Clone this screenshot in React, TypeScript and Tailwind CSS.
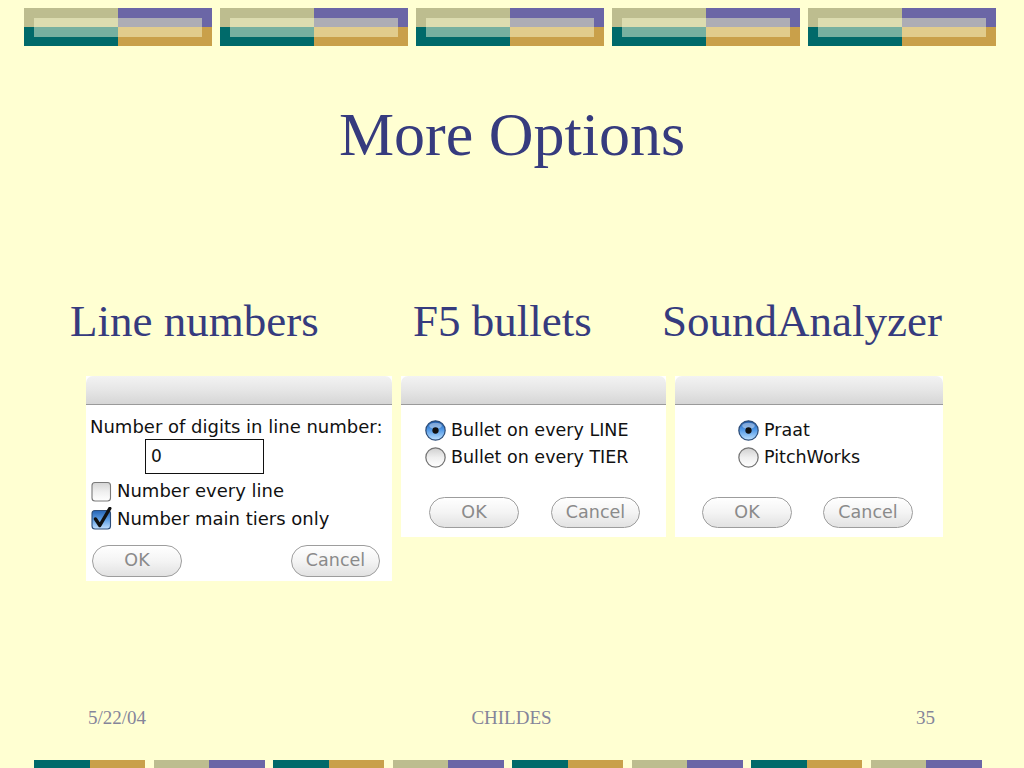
import React from "react";

const serif = { fontFamily: '"Liberation Serif", "Times New Roman", serif' };
const mac = { fontFamily: '"DejaVu Sans", "Lucida Grande", Verdana, sans-serif' };

function BannerBlock() {
  return (
    <svg width="188" height="38" viewBox="0 0 188 38" className="block shrink-0">
      <rect x="0" y="0" width="94" height="19" fill="#BDBD8F" />
      <rect x="94" y="0" width="94" height="19" fill="#6B66A6" />
      <rect x="0" y="19" width="94" height="19" fill="#006A6A" />
      <rect x="94" y="19" width="94" height="19" fill="#C9A04A" />
      <rect x="10" y="10" width="84" height="9" fill="#DCDCB0" />
      <rect x="94" y="10" width="84" height="9" fill="#ADADB5" />
      <rect x="10" y="19" width="84" height="10" fill="#76B0A0" />
      <rect x="94" y="19" width="84" height="10" fill="#E1CC8C" />
    </svg>
  );
}

function FooterBlock({ alt }: { alt: boolean }) {
  return (
    <div className="flex h-[8px] w-[111px] shrink-0">
      <div className={alt ? "h-full w-1/2 bg-[#BDBD8F]" : "h-full w-1/2 bg-[#006A6A]"} />
      <div className={alt ? "h-full w-1/2 bg-[#6B66A6]" : "h-full w-1/2 bg-[#C9A04A]"} />
    </div>
  );
}

function Radio({ on }: { on: boolean }) {
  const id = on ? "radOn" : "radOff";
  return (
    <svg width="21" height="21" viewBox="0 0 20 20" className="block shrink-0">
      <defs>
        <linearGradient id={id} x1="0" y1="0" x2="0" y2="1">
          {on ? (
            <>
              <stop offset="0" stopColor="#1a56a8" />
              <stop offset="0.45" stopColor="#4f97e6" />
              <stop offset="1" stopColor="#bfe2ff" />
            </>
          ) : (
            <>
              <stop offset="0" stopColor="#cfcfcf" />
              <stop offset="0.5" stopColor="#efefef" />
              <stop offset="1" stopColor="#ffffff" />
            </>
          )}
        </linearGradient>
      </defs>
      <circle cx="10" cy="10" r="9.2" fill={`url(#${id})`} stroke={on ? "#2d4d78" : "#747474"} strokeWidth="1.2" />
      {on && <ellipse cx="10" cy="5.5" rx="6" ry="3" fill="#ffffff" opacity="0.4" />}
      {on && <circle cx="10" cy="10" r="3" fill="#111" />}
    </svg>
  );
}

function Checkbox({ on }: { on: boolean }) {
  const id = on ? "chkOn" : "chkOff";
  return (
    <svg width="22" height="23" viewBox="0 0 22 23" className="block shrink-0">
      <defs>
        <linearGradient id={id} x1="0" y1="0" x2="0" y2="1">
          {on ? (
            <>
              <stop offset="0" stopColor="#2463b5" />
              <stop offset="0.5" stopColor="#5f9fe4" />
              <stop offset="1" stopColor="#c2e0ff" />
            </>
          ) : (
            <>
              <stop offset="0" stopColor="#d4d4d4" />
              <stop offset="0.5" stopColor="#efefef" />
              <stop offset="1" stopColor="#ffffff" />
            </>
          )}
        </linearGradient>
      </defs>
      <rect x="1" y="3.5" width="18.5" height="18.5" rx="3" fill={`url(#${id})`} stroke={on ? "#2d4d78" : "#7a7a7a"} strokeWidth="1.1" />
      {on && (
        <path d="M4.5 12 L8.8 18.5 L18.8 1.5" fill="none" stroke="#111" strokeWidth="3.4" strokeLinecap="round" strokeLinejoin="round" />
      )}
    </svg>
  );
}

function MacButton({ label, w }: { label: string; w: string }) {
  return (
    <div
      className={`${w} flex items-center justify-center rounded-full border border-[#9d9d9d] bg-linear-to-b from-[#ffffff] via-[#f4f4f4] to-[#e2e2e2] text-[17.5px] leading-none text-[#8a8a8a] shadow-[inset_0_1px_0_#fff]`}
      style={mac}
    >
      {label}
    </div>
  );
}

function TitleBar() {
  return (
    <div className="h-[29px] rounded-t-[7px] border-b border-[#9a9a9a] bg-linear-to-b from-[#f3f3f3] via-[#e6e6e6] to-[#d6d6d6]" />
  );
}

export default function App() {
  return (
    <div className="flex h-[768px] w-[1024px] flex-col overflow-hidden bg-[#FFFFD2]">
      {/* top banner */}
      <div className="flex gap-[8px] pl-[24px] pt-[8px]">
        <BannerBlock />
        <BannerBlock />
        <BannerBlock />
        <BannerBlock />
        <BannerBlock />
      </div>

      {/* title */}
      <div className="mt-[57px] text-center text-[62px] leading-[62px] text-[#363B7E]" style={serif}>
        More Options
      </div>

      {/* subheadings */}
      <div className="mt-[134px] flex pl-[70px] text-[45px] leading-[45px] text-[#363B7E]" style={serif}>
        <div className="w-[343px] shrink-0">Line numbers</div>
        <div className="w-[249px] shrink-0">F5 bullets</div>
        <div className="shrink-0">SoundAnalyzer</div>
      </div>

      {/* dialogs */}
      <div className="mt-[32px] flex items-start gap-[9px] pl-[86px]" style={mac}>
        {/* dialog 1 */}
        <div className="w-[306px] shrink-0 bg-white">
          <TitleBar />
          <div className="pl-[4px] pt-[12px] text-[18px] leading-[20px] text-[#111]">
            Number of digits in line number:
          </div>
          <div className="ml-[59px] mt-[2px] flex h-[35px] w-[119px] items-center border-[1.5px] border-[#111] pl-[5px] text-[17px] text-[#111]">
            0
          </div>
          <div className="ml-[5px] mt-[5px] flex h-[23px] items-end gap-[4px] text-[18px] leading-[20px] text-[#111]">
            <Checkbox on={false} />
            <span className="pb-[1px]">Number every line</span>
          </div>
          <div className="ml-[5px] mt-[5px] flex h-[23px] items-end gap-[4px] text-[18px] leading-[20px] text-[#111]">
            <Checkbox on={true} />
            <span className="pb-[1px]">Number main tiers only</span>
          </div>
          <div className="mt-[15px] flex justify-between pb-[4px] pl-[6px] pr-[12px]">
            <MacButton label="OK" w="h-[32px] w-[90px]" />
            <MacButton label="Cancel" w="h-[32px] w-[89px]" />
          </div>
        </div>

        {/* dialog 2 */}
        <div className="w-[265px] shrink-0 bg-white">
          <TitleBar />
          <div className="flex flex-col gap-[6px] pl-[24px] pt-[15px] text-[17.5px] leading-[21px] text-[#111]">
            <div className="flex items-center gap-[5px]">
              <Radio on={true} />
              <span>Bullet on every LINE</span>
            </div>
            <div className="flex items-center gap-[5px]">
              <Radio on={false} />
              <span>Bullet on every TIER</span>
            </div>
          </div>
          <div className="mt-[29px] flex gap-[32px] pb-[9px] pl-[28px]">
            <MacButton label="OK" w="h-[31px] w-[90px]" />
            <MacButton label="Cancel" w="h-[31px] w-[89px]" />
          </div>
        </div>

        {/* dialog 3 */}
        <div className="w-[268px] shrink-0 bg-white">
          <TitleBar />
          <div className="flex flex-col gap-[6px] pl-[63px] pt-[15px] text-[17.5px] leading-[21px] text-[#111]">
            <div className="flex items-center gap-[5px]">
              <Radio on={true} />
              <span>Praat</span>
            </div>
            <div className="flex items-center gap-[5px]">
              <Radio on={false} />
              <span>PitchWorks</span>
            </div>
          </div>
          <div className="mt-[29px] flex gap-[31px] pb-[9px] pl-[27px]">
            <MacButton label="OK" w="h-[31px] w-[90px]" />
            <MacButton label="Cancel" w="h-[31px] w-[90px]" />
          </div>
        </div>
      </div>

      {/* footer text */}
      <div className="mt-[127px] grid grid-cols-3 pl-[88px] pr-[89px] text-[19px] leading-[20px] text-[#85859a]" style={serif}>
        <div>5/22/04</div>
        <div className="text-center">CHILDES</div>
        <div className="text-right">35</div>
      </div>

      {/* bottom bar */}
      <div className="mt-auto flex gap-[8.5px] pl-[34px]">
        <FooterBlock alt={false} />
        <FooterBlock alt={true} />
        <FooterBlock alt={false} />
        <FooterBlock alt={true} />
        <FooterBlock alt={false} />
        <FooterBlock alt={true} />
        <FooterBlock alt={false} />
        <FooterBlock alt={true} />
      </div>
    </div>
  );
}
